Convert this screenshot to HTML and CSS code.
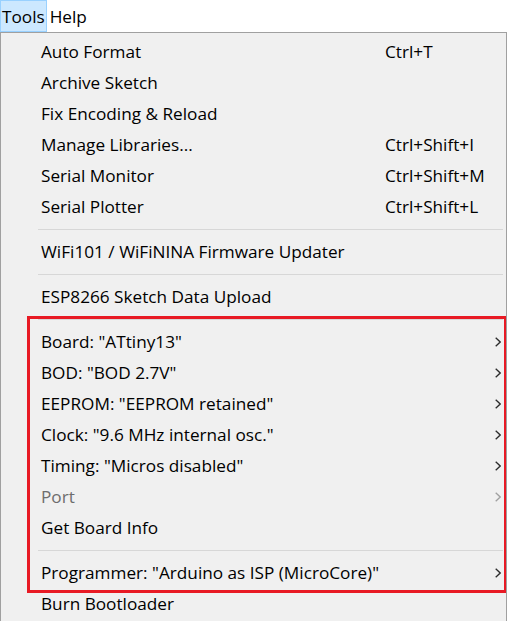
FILE: index.html
```html
<!DOCTYPE html>
<html>
<head>
<meta charset="utf-8">
<link rel="stylesheet" href="styles.css">
</head>
<body>
<div class="menubar">
  <div class="mb-item active">Tools</div>
  <div class="mb-item">Help</div>
</div>
<div class="popup">
  <div class="item"><span class="label">Auto Format</span><span class="shortcut">Ctrl+T</span></div>
  <div class="item"><span class="label">Archive Sketch</span></div>
  <div class="item"><span class="label">Fix Encoding &amp; Reload</span></div>
  <div class="item"><span class="label">Manage Libraries...</span><span class="shortcut">Ctrl+Shift+I</span></div>
  <div class="item"><span class="label">Serial Monitor</span><span class="shortcut">Ctrl+Shift+M</span></div>
  <div class="item"><span class="label">Serial Plotter</span><span class="shortcut">Ctrl+Shift+L</span></div>
  <div class="sep"></div>
  <div class="item"><span class="label">WiFi101 / WiFiNINA Firmware Updater</span></div>
  <div class="sep"></div>
  <div class="item"><span class="label">ESP8266 Sketch Data Upload</span></div>
  <div class="sep"></div>
  <div class="item sub"><span class="label">Board: "ATtiny13"</span><svg class="chev" viewBox="0 0 6 10"><polyline points="0.7,0.7 5.2,5 0.7,9.3"/></svg></div>
  <div class="item sub"><span class="label">BOD: "BOD 2.7V"</span><svg class="chev" viewBox="0 0 6 10"><polyline points="0.7,0.7 5.2,5 0.7,9.3"/></svg></div>
  <div class="item sub"><span class="label">EEPROM: "EEPROM retained"</span><svg class="chev" viewBox="0 0 6 10"><polyline points="0.7,0.7 5.2,5 0.7,9.3"/></svg></div>
  <div class="item sub"><span class="label">Clock: "9.6 MHz internal osc."</span><svg class="chev" viewBox="0 0 6 10"><polyline points="0.7,0.7 5.2,5 0.7,9.3"/></svg></div>
  <div class="item sub"><span class="label">Timing: "Micros disabled"</span><svg class="chev" viewBox="0 0 6 10"><polyline points="0.7,0.7 5.2,5 0.7,9.3"/></svg></div>
  <div class="item sub disabled"><span class="label">Port</span><svg class="chev" viewBox="0 0 6 10"><polyline points="0.7,0.7 5.2,5 0.7,9.3"/></svg></div>
  <div class="item"><span class="label">Get Board Info</span></div>
  <div class="sep"></div>
  <div class="item sub"><span class="label">Programmer: "Arduino as ISP (MicroCore)"</span><svg class="chev" viewBox="0 0 6 10"><polyline points="0.7,0.7 5.2,5 0.7,9.3"/></svg></div>
  <div class="item"><span class="label">Burn Bootloader</span></div>
  <div class="highlight-box"></div>
</div>
</body>
</html>
```
FILE: styles.css
```css
html, body {
  margin: 0;
  padding: 0;
  background: #ffffff;
  overflow: hidden;
}
body {
  font-family: "Open Sans", "Noto Sans", sans-serif;
  font-size: 17.2px;
  color: #000;
  width: 509px;
  height: 621px;
}
.menubar {
  display: flex;
  height: 32px;
  align-items: stretch;
}
.mb-item {
  display: flex;
  align-items: center;
  padding: 0 4px 0 2px;
  border: 1px solid transparent;
}
.mb-item.active {
  background: #cce8ff;
  border-color: #99d1ff;
  padding: 0 1px 0 1px;
}
.popup {
  position: relative;
  width: 505px;
  height: 586px;
  background: #f0f0f0;
  border: 1px solid #a0a0a0;
  padding-top: 3px;
  overflow: hidden;
}
.item {
  display: flex;
  align-items: center;
  height: 31px;
  padding-left: 40px;
  padding-right: 6px;
}
.label {
  width: 344px;
  flex: none;
  white-space: nowrap;
}
.shortcut {
  white-space: nowrap;
}
.item.sub .label {
  flex: 1;
}
.item.disabled {
  color: #6d6d6d;
}
.chev {
  width: 6px;
  height: 10px;
  fill: none;
  stroke: #2b2b2b;
  stroke-width: 1.3;
  margin-right: -1px;
}
.item.disabled .chev {
  stroke: #a0a0a0;
}
.sep {
  height: 14px;
  display: flex;
  align-items: center;
  padding: 0 3px 0 37px;
}
.sep::before {
  content: "";
  flex: 1;
  height: 1px;
  background: #d7d7d7;
}
.highlight-box {
  position: absolute;
  left: 26px;
  top: 283px;
  width: 474px;
  height: 271px;
  border: 3px solid #e81a24;
}
```
